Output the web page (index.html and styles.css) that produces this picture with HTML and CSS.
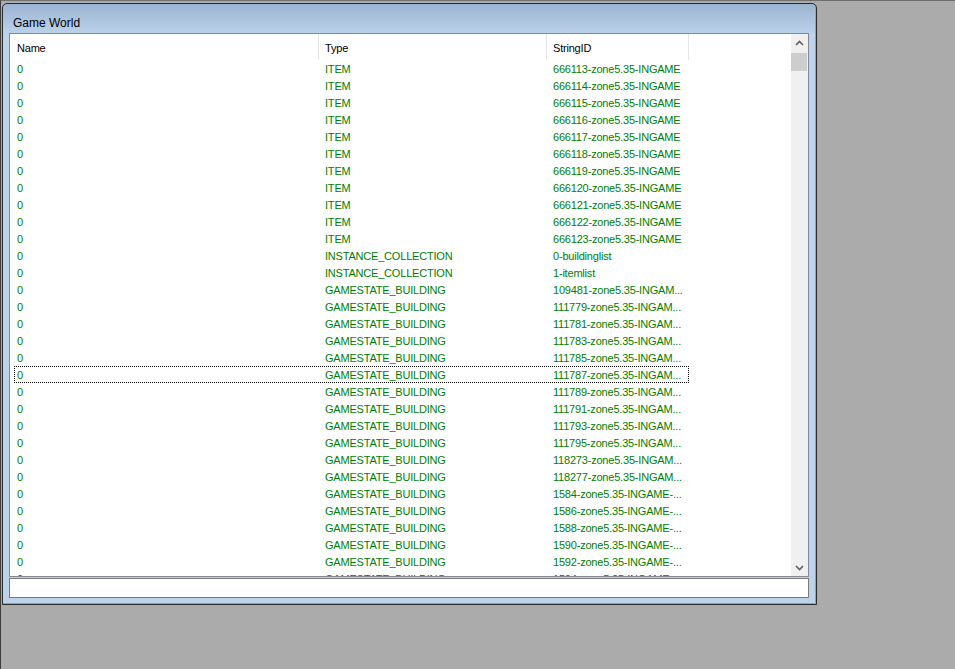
FILE: index.html
```html
<!DOCTYPE html>
<html>
<head>
<meta charset="utf-8">
<title>Game World</title>
<link rel="stylesheet" href="styles.css">
</head>
<body>
<div class="screen">
  <div class="window">
    <div class="titlebar">Game World</div>
    <div class="list">
      <div class="list-body">
        <div class="header">
          <div class="hcell c1">Name</div>
          <div class="hcell c2">Type</div>
          <div class="hcell c3">StringID</div>
        </div>
        <div class="rows">
          <div class="row"><span class="cell c1">0</span><span class="cell c2">ITEM</span><span class="cell c3">666113-zone5.35-INGAME</span></div>
          <div class="row"><span class="cell c1">0</span><span class="cell c2">ITEM</span><span class="cell c3">666114-zone5.35-INGAME</span></div>
          <div class="row"><span class="cell c1">0</span><span class="cell c2">ITEM</span><span class="cell c3">666115-zone5.35-INGAME</span></div>
          <div class="row"><span class="cell c1">0</span><span class="cell c2">ITEM</span><span class="cell c3">666116-zone5.35-INGAME</span></div>
          <div class="row"><span class="cell c1">0</span><span class="cell c2">ITEM</span><span class="cell c3">666117-zone5.35-INGAME</span></div>
          <div class="row"><span class="cell c1">0</span><span class="cell c2">ITEM</span><span class="cell c3">666118-zone5.35-INGAME</span></div>
          <div class="row"><span class="cell c1">0</span><span class="cell c2">ITEM</span><span class="cell c3">666119-zone5.35-INGAME</span></div>
          <div class="row"><span class="cell c1">0</span><span class="cell c2">ITEM</span><span class="cell c3">666120-zone5.35-INGAME</span></div>
          <div class="row"><span class="cell c1">0</span><span class="cell c2">ITEM</span><span class="cell c3">666121-zone5.35-INGAME</span></div>
          <div class="row"><span class="cell c1">0</span><span class="cell c2">ITEM</span><span class="cell c3">666122-zone5.35-INGAME</span></div>
          <div class="row"><span class="cell c1">0</span><span class="cell c2">ITEM</span><span class="cell c3">666123-zone5.35-INGAME</span></div>
          <div class="row"><span class="cell c1">0</span><span class="cell c2">INSTANCE_COLLECTION</span><span class="cell c3">0-buildinglist</span></div>
          <div class="row"><span class="cell c1">0</span><span class="cell c2">INSTANCE_COLLECTION</span><span class="cell c3">1-itemlist</span></div>
          <div class="row"><span class="cell c1">0</span><span class="cell c2">GAMESTATE_BUILDING</span><span class="cell c3">109481-zone5.35-INGAM...</span></div>
          <div class="row"><span class="cell c1">0</span><span class="cell c2">GAMESTATE_BUILDING</span><span class="cell c3">111779-zone5.35-INGAM...</span></div>
          <div class="row"><span class="cell c1">0</span><span class="cell c2">GAMESTATE_BUILDING</span><span class="cell c3">111781-zone5.35-INGAM...</span></div>
          <div class="row"><span class="cell c1">0</span><span class="cell c2">GAMESTATE_BUILDING</span><span class="cell c3">111783-zone5.35-INGAM...</span></div>
          <div class="row"><span class="cell c1">0</span><span class="cell c2">GAMESTATE_BUILDING</span><span class="cell c3">111785-zone5.35-INGAM...</span></div>
          <div class="row focus"><span class="cell c1">0</span><span class="cell c2">GAMESTATE_BUILDING</span><span class="cell c3">111787-zone5.35-INGAM...</span></div>
          <div class="row"><span class="cell c1">0</span><span class="cell c2">GAMESTATE_BUILDING</span><span class="cell c3">111789-zone5.35-INGAM...</span></div>
          <div class="row"><span class="cell c1">0</span><span class="cell c2">GAMESTATE_BUILDING</span><span class="cell c3">111791-zone5.35-INGAM...</span></div>
          <div class="row"><span class="cell c1">0</span><span class="cell c2">GAMESTATE_BUILDING</span><span class="cell c3">111793-zone5.35-INGAM...</span></div>
          <div class="row"><span class="cell c1">0</span><span class="cell c2">GAMESTATE_BUILDING</span><span class="cell c3">111795-zone5.35-INGAM...</span></div>
          <div class="row"><span class="cell c1">0</span><span class="cell c2">GAMESTATE_BUILDING</span><span class="cell c3">118273-zone5.35-INGAM...</span></div>
          <div class="row"><span class="cell c1">0</span><span class="cell c2">GAMESTATE_BUILDING</span><span class="cell c3">118277-zone5.35-INGAM...</span></div>
          <div class="row"><span class="cell c1">0</span><span class="cell c2">GAMESTATE_BUILDING</span><span class="cell c3">1584-zone5.35-INGAME-...</span></div>
          <div class="row"><span class="cell c1">0</span><span class="cell c2">GAMESTATE_BUILDING</span><span class="cell c3">1586-zone5.35-INGAME-...</span></div>
          <div class="row"><span class="cell c1">0</span><span class="cell c2">GAMESTATE_BUILDING</span><span class="cell c3">1588-zone5.35-INGAME-...</span></div>
          <div class="row"><span class="cell c1">0</span><span class="cell c2">GAMESTATE_BUILDING</span><span class="cell c3">1590-zone5.35-INGAME-...</span></div>
          <div class="row"><span class="cell c1">0</span><span class="cell c2">GAMESTATE_BUILDING</span><span class="cell c3">1592-zone5.35-INGAME-...</span></div>
          <div class="row"><span class="cell c1">0</span><span class="cell c2">GAMESTATE_BUILDING</span><span class="cell c3">1594-zone5.35-INGAME-...</span></div>
        </div>
      </div>
      <div class="scrollbar">
        <div class="sb-btn">
          <svg width="9" height="6" viewBox="0 0 9 6"><polyline points="1,5 4.5,1.5 8,5" fill="none" stroke="#606060" stroke-width="1.6"/></svg>
        </div>
        <div class="sb-track"><div class="sb-thumb"></div></div>
        <div class="sb-btn">
          <svg width="9" height="6" viewBox="0 0 9 6"><polyline points="1,1 4.5,4.5 8,1" fill="none" stroke="#606060" stroke-width="1.6"/></svg>
        </div>
      </div>
    </div>
    <div class="textbox"></div>
  </div>
</div>
</body>
</html>
```

FILE: styles.css
```css
html, body {
  margin: 0;
  padding: 0;
  background: #ababab;
}

.screen {
  width: 955px;
  height: 669px;
  box-sizing: border-box;
  border-top: 1px solid #6f6f6f;
  border-left: 1px solid #3c3c3c;
  background: #ababab;
  overflow: hidden;
}

.window {
  margin: 2px 0 0 1px;
  width: 815px;
  height: 602px;
  box-sizing: border-box;
  border: 1px solid #2a2a2a;
  border-radius: 5px 5px 0 0;
  padding: 0 7px 0 6px;
  background: linear-gradient(to bottom, #9cb4d1 0px, #b9d0e9 28px, #bcd3eb 30px, #bcd3eb 100%);
  box-shadow: inset -1px -1px 0 #3fc3e6;
  display: flex;
  flex-direction: column;
  font-family: "Liberation Sans", Arial, sans-serif;
}

.titlebar {
  height: 29px;
  box-sizing: border-box;
  padding: 12px 0 0 4px;
  font-size: 12px;
  line-height: 14px;
  color: #000;
}

.list {
  height: 544px;
  box-sizing: border-box;
  border: 1px solid #828790;
  background: #fff;
  display: flex;
  overflow: hidden;
}

.list-body {
  flex: 1;
  overflow: hidden;
  font-size: 11px;
  letter-spacing: -0.2px;
}

.header {
  display: flex;
  height: 26px;
}

.hcell {
  box-sizing: border-box;
  border-right: 1px solid #e5e5e5;
  padding-left: 6px;
  padding-top: 3px;
  line-height: 23px;
  color: #000;
  white-space: nowrap;
}

.c1 { width: 309px; padding-left: 7px; }
.c2 { width: 228px; }
.c3 { width: 142px; }

.hcell.c1 { padding-left: 7px; }

.row {
  display: flex;
  height: 17px;
  line-height: 17px;
  padding-top: 0;
  color: #008000;
}

.row .cell {
  position: relative;
  top: 1px;
}

.row.focus {
  position: relative;
}

.row.focus::after {
  content: "";
  position: absolute;
  left: 4px;
  top: 0;
  width: 675px;
  height: 17px;
  box-sizing: border-box;
  border: 1px dotted #000;
}

.cell {
  display: block;
  box-sizing: border-box;
  padding-left: 6px;
  white-space: nowrap;
  overflow: hidden;
}

.cell.c1 { padding-left: 7px; }

.scrollbar {
  width: 17px;
  background: #f0f0f0;
  display: flex;
  flex-direction: column;
}

.sb-btn {
  height: 17px;
  display: flex;
  align-items: center;
  justify-content: center;
}

.sb-track {
  flex: 1;
  padding-top: 2px;
}

.sb-thumb {
  margin: 0 1px 0 0;
  height: 18px;
  background: #cdcdcd;
}

.textbox {
  margin-top: 1px;
  height: 20px;
  box-sizing: border-box;
  border: 1px solid #7a7a7a;
  background: #fff;
}
```
